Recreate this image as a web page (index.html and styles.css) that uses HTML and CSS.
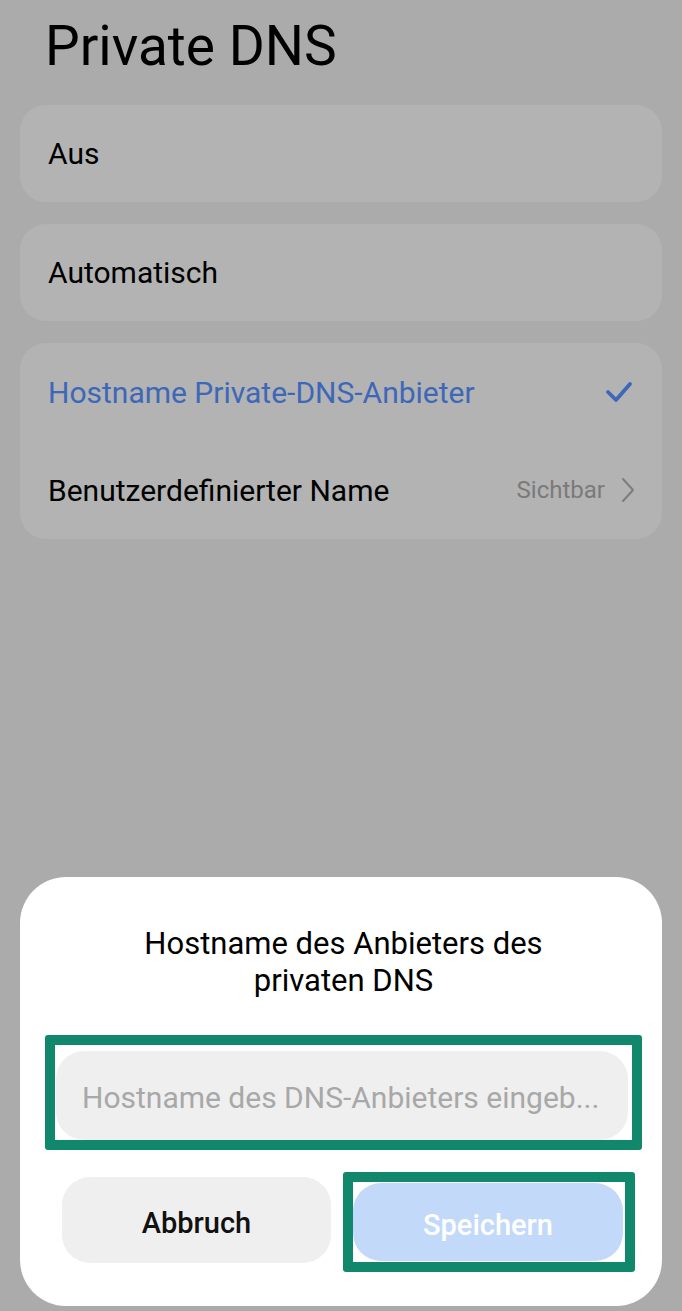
FILE: index.html
```html
<!DOCTYPE html>
<html lang="de">
<head>
    <meta charset="UTF-8">
    <meta name="viewport" content="width=device-width, initial-scale=1.0">
    <title>Private DNS</title>
    <link rel="stylesheet" href="styles.css">
</head>
<body>

<div class="screen">
    <h1 class="page-title">Private DNS</h1>

    <div class="card">
        <div class="row">
            <span class="row-label">Aus</span>
        </div>
    </div>

    <div class="card">
        <div class="row">
            <span class="row-label">Automatisch</span>
        </div>
    </div>

    <div class="card">
        <div class="row">
            <span class="row-label selected">Hostname Private-DNS-Anbieter</span>
            <svg class="check" width="28" height="24" viewBox="0 0 28 24">
                <path d="M3 12 L11 20 L25 4" fill="none" stroke="#3d68b9" stroke-width="3.8" stroke-linecap="round" stroke-linejoin="round"/>
            </svg>
        </div>
        <div class="row">
            <span class="row-label">Benutzerdefinierter Name</span>
            <span class="row-value">Sichtbar</span>
            <svg class="chevron" width="14" height="26" viewBox="0 0 14 26">
                <path d="M2 2 L12 13 L2 24" fill="none" stroke="#7d7d7d" stroke-width="2" stroke-linecap="round" stroke-linejoin="round"/>
            </svg>
        </div>
    </div>
</div>

<div class="dialog">
    <h2 class="dialog-title">Hostname des Anbieters des<br>privaten DNS</h2>

    <div class="highlight input-highlight">
        <input class="dns-input" type="text" placeholder="Hostname des DNS-Anbieters eingeb...">
    </div>

    <div class="dialog-buttons">
        <button class="btn btn-cancel">Abbruch</button>
        <div class="highlight save-highlight">
            <button class="btn btn-save">Speichern</button>
        </div>
    </div>
</div>

</body>
</html>
```

FILE: styles.css
```css
body {
    font-family: Roboto, "Noto Sans", sans-serif;
    background-color: #ababab;
    margin: 0;
    height: 1311px;
    overflow: hidden;
    position: relative;
}

.screen {
    padding: 0 20px;
}

.page-title {
    margin: 0;
    padding: 14px 0 0 25px;
    font-size: 55px;
    font-weight: 400;
    line-height: 64px;
    color: #000;
    margin-bottom: 27px;
}

.card {
    background-color: #b3b3b3;
    border-radius: 26px;
    margin-bottom: 22px;
}

.row {
    display: flex;
    align-items: center;
    height: 98px;
    padding: 0 27px 0 28px;
}

.card .row:first-child:last-child {
    height: 97px;
}

.row-label {
    flex: 1;
    font-size: 30px;
    color: #000;
}

.row-label.selected {
    color: #3d68b9;
}

.row-value {
    font-size: 24px;
    color: #7a7a7a;
    margin-right: 16px;
}

.check {
    margin-right: 2px;
}

.dialog {
    position: absolute;
    left: 20px;
    right: 20px;
    bottom: 5px;
    height: 429px;
    box-sizing: border-box;
    background-color: #fff;
    border-radius: 46px;
    padding: 48px 20px 0 25px;
}

.dialog-title {
    margin: 0 0 36px;
    text-align: center;
    font-size: 31px;
    font-weight: 400;
    line-height: 37px;
    color: #000;
}

.highlight {
    border: 10px solid #11876b;
    border-radius: 3px;
}

.input-highlight {
    padding: 6px 4px 0 1px;
}

.dns-input {
    display: block;
    width: 100%;
    box-sizing: border-box;
    height: 89px;
    border: none;
    border-radius: 28px;
    background-color: #efefef;
    padding: 4px 26px 0;
    font-family: Roboto, "Noto Sans", sans-serif;
    font-size: 30px;
    outline: none;
}

.dns-input::placeholder {
    color: #a8a8a8;
}

.dialog-buttons {
    display: flex;
    align-items: flex-start;
    margin-top: 22px;
    padding-left: 17px;
}

.btn {
    font-family: Roboto, "Noto Sans", sans-serif;
    font-size: 29px;
    font-weight: 500;
    border: none;
    border-radius: 28px;
    cursor: pointer;
    padding-top: 6px;
}

.btn-cancel {
    width: 269px;
    height: 86px;
    margin-top: 5px;
    margin-right: 12px;
    background-color: #efefef;
    color: #111;
}

.save-highlight {
    width: 271px;
    height: 79px;
    padding: 1px 1px 0 0;
}

.btn-save {
    width: 270px;
    height: 78px;
    background-color: #c2d9fa;
    color: #fff;
}
```
